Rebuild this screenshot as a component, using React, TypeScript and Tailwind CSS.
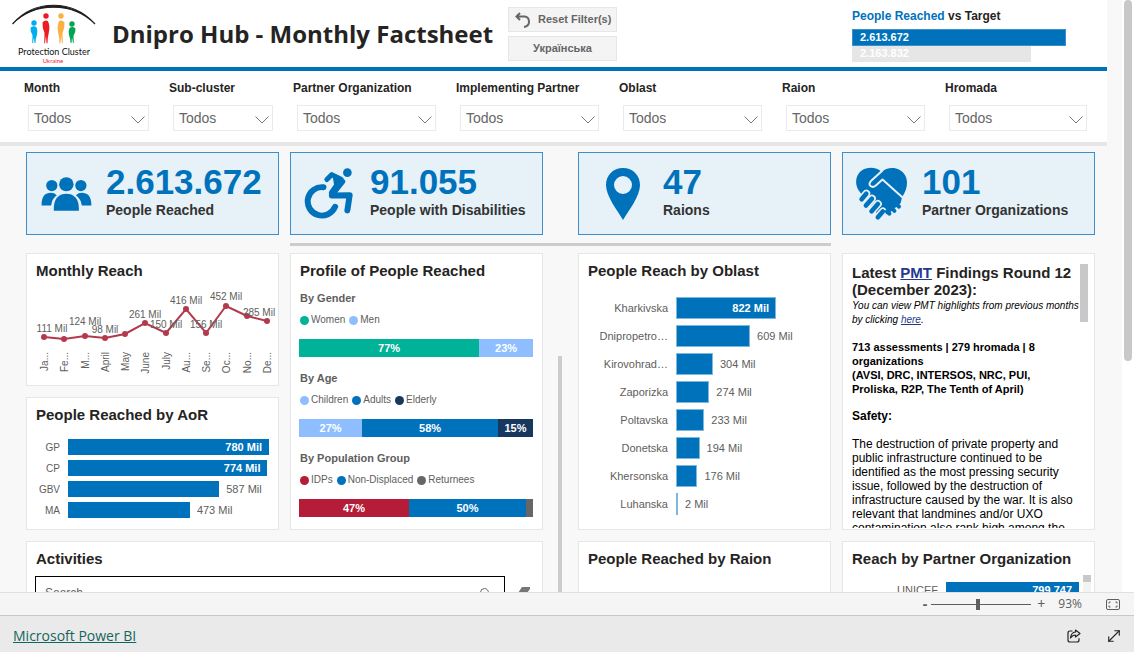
import { MoveDiagonal, Search } from "lucide-react";

const filters = [
  "Month",
  "Sub-cluster",
  "Partner Organization",
  "Implementing Partner",
  "Oblast",
  "Raion",
  "Hromada",
];

const monthly = [
  { month: "Ja...", x: 17, y: 47, label: "111 Mil", lx: 25, ly: 42 },
  { month: "Fe...", x: 37, y: 49 },
  { month: "M...", x: 58, y: 46, label: "124 Mil", lx: 58, ly: 35 },
  { month: "April", x: 78, y: 48, label: "98 Mil", lx: 78, ly: 43 },
  { month: "May", x: 98, y: 44 },
  { month: "June", x: 118, y: 33, label: "261 Mil", lx: 118, ly: 28 },
  { month: "July", x: 139, y: 43, label: "150 Mil", lx: 139, ly: 38 },
  { month: "Au...", x: 159, y: 19, label: "416 Mil", lx: 159, ly: 14 },
  { month: "Se...", x: 179, y: 43, label: "156 Mil", lx: 179, ly: 38 },
  { month: "Oc...", x: 199, y: 16, label: "452 Mil", lx: 199, ly: 10 },
  { month: "No...", x: 220, y: 26 },
  { month: "De...", x: 240, y: 31, label: "285 Mil", lx: 232, ly: 26 },
];

const aor = [
  { name: "GP", value: 780 },
  { name: "CP", value: 774 },
  { name: "GBV", value: 587 },
  { name: "MA", value: 473 },
];

const oblasts = [
  { name: "Kharkivska", value: 822 },
  { name: "Dnipropetro…", value: 609 },
  { name: "Kirovohrad…", value: 304 },
  { name: "Zaporizka", value: 274 },
  { name: "Poltavska", value: 233 },
  { name: "Donetska", value: 194 },
  { name: "Khersonska", value: 176 },
  { name: "Luhanska", value: 2 },
];

const profile = [
  {
    title: "By Gender",
    parts: [
      { name: "Women", value: 77, color: "bg-[#00b398]" },
      { name: "Men", value: 23, color: "bg-[#8ebeff]" },
    ],
  },
  {
    title: "By Age",
    parts: [
      { name: "Children", value: 27, color: "bg-[#8ebeff]" },
      { name: "Adults", value: 58, color: "bg-[#0072bc]" },
      { name: "Elderly", value: 15, color: "bg-[#18375f]" },
    ],
  },
  {
    title: "By Population Group",
    parts: [
      { name: "IDPs", value: 47, color: "bg-[#b41c37]" },
      { name: "Non-Displaced", value: 50, color: "bg-[#0072bc]" },
      { name: "Returnees", value: 3, color: "bg-[#666666]" },
    ],
  },
];

const Logo = () => (
  <svg viewBox="0 0 87 62" className="w-[87px] h-[62px] shrink-0" role="img" aria-label="Protection Cluster Ukraine">
    <path d="M.5 20 C22 -5 61 -5 83 20 C61 -2.500 22 -2.500 .5 20Z" fill="#231f20" stroke="#231f20" strokeWidth="1.2" />
    {[
      { x: 22, y: 19, c: "#00aeef", d: 1, s: 0.95 },
      { x: 34, y: 12, c: "#ed1c24", d: 1, s: 1.3 },
      { x: 49, y: 12, c: "#fbb040", d: -1, s: 1.3 },
      { x: 60, y: 20, c: "#00a651", d: -1, s: 0.9 },
    ].map((p) => (
      <g key={p.c} fill={p.c} transform={`translate(${p.x} ${p.y})`}>
        <circle r="2.7" />
        <path
          transform={`scale(${p.d} ${p.s})`}
          d="M-3.500 5 Q-1 2.500 2 4 Q4 7 3 12 Q1.500 17 1.500 21 L.5 21 L0 15 L-1 21 L-1.800 21 L-1.500 13 L-3.200 9Z"
        />
      </g>
    ))}
    <text x="42" y="51" textAnchor="middle" fontFamily="Lato, sans-serif" fontSize="9" fill="#111">
      Protection Cluster
    </text>
    <text x="41" y="59" textAnchor="middle" fontFamily="Lato, sans-serif" fontSize="6" fill="#ed1c24">
      Ukraine
    </text>
  </svg>
);

const PeopleIcon = () => (
  <svg viewBox="124 110 153 103" className="w-[51px] h-[34px]" fill="#0072bc">
    <circle cx="156" cy="136" r="17" />
    <circle cx="244" cy="136" r="17" />
    <ellipse cx="200" cy="132" rx="22" ry="21" />
    <path d="M162 212 V204 C163 174 178 161 200 161 C222 161 237 174 238 204 V212Z" />
    <path d="M125 196 C125 168 136 158 153 158 Q164 158 171 165 Q156 176 154 196Z" />
    <path d="M276 196 C276 168 264 158 247 158 Q236 158 229 165 Q244 176 247 196Z" />
  </svg>
);

const WheelchairIcon = () => (
  <svg viewBox="72 78 148 154" className="mr-1 w-[49px] h-[51px]" fill="none" stroke="#0072bc" strokeLinecap="round" strokeLinejoin="round">
    <circle cx="203" cy="92" r="13" fill="#0072bc" stroke="none" />
    <path d="M131 136 A43 43 0 1 0 166 195" strokeWidth="18" />
    <path d="M141 113 L156 98 L184 112" strokeWidth="15" />
    <path d="M166 104 L190 119 L160 157 L154 152 L170 130Z" fill="#0072bc" strokeWidth="14" />
    <path d="M156 161 L210 160 L203 206" strokeWidth="18" />
  </svg>
);

const PinIcon = () => (
  <svg viewBox="0 0 36 54" className="ml-1 w-9 h-[54px]">
    <path
      fill="#0072bc"
      fillRule="evenodd"
      d="M18 1 C8 1 1 8.500 1 18 C1 29 12 43 18 53 C24 43 35 29 35 18 C35 8.500 28 1 18 1Z M18 9 A9 9 0 1 1 18 27 A9 9 0 1 1 18 9Z"
    />
  </svg>
);

const HandshakeIcon = () => (
  <svg viewBox="74 82 160 162" className="mr-0.5 w-[53px] h-[54px]">
    <path
      fill="#0072bc"
      d="M154 96 C140 82 112 80 94 92 C74 106 72 136 88 156 L146 230 Q154 226 176 222 L212 190 L216 172 C230 154 236 128 226 108 C212 80 174 78 154 96Z"
    />
    <path d="M82 156 L136 244 H80Z" fill="#e6f1f8" />
    <path
      d="M157 92 L122 124 Q114 133 121 139 Q128 145 137 137 L157 119 L216 172"
      fill="none"
      stroke="#e6f1f8"
      strokeWidth="6"
      strokeLinecap="round"
      strokeLinejoin="round"
    />
    {[
      [94, 179, 108, 162],
      [107, 198, 125, 177],
      [124, 215, 143, 193],
      [143, 233, 158, 216],
    ].map(([x1, y1, x2, y2]) => (
      <g key={x1} strokeLinecap="round">
        <line x1={x1} y1={y1} x2={x2} y2={y2} stroke="#e6f1f8" strokeWidth="24" />
        <line x1={x1} y1={y1} x2={x2} y2={y2} stroke="#0072bc" strokeWidth="14" />
      </g>
    ))}
    <path d="M170 216 L178 222 M184 205 L193 214 M196 192 L207 201" stroke="#0072bc" strokeWidth="12" strokeLinecap="round" />
  </svg>
);

const Kpi = ({
  icon,
  value,
  label,
  className,
  iconWidth = "w-[79px]",
}: {
  icon: React.ReactNode;
  value: string;
  label: string;
  className: string;
  iconWidth?: string;
}) => (
  <div className={`${className} flex h-[83px] items-center border border-[#3e8fc9] bg-[#e6f1f8]`}>
    <div className={`${iconWidth} flex shrink-0 justify-center`}>{icon}</div>
    <div className="pb-1">
      <div className="text-[35px] leading-9 font-bold text-[#0072bc]">{value}</div>
      <div className="text-sm leading-5 font-bold text-[#333333]">{label}</div>
    </div>
  </div>
);

const Card = ({ title, className = "", children }: { title: string; className?: string; children?: React.ReactNode }) => (
  <section className={`${className} border border-[#e6e6e6] bg-white px-[9px] pt-2`}>
    <h2 className="text-[15px] leading-[18px] font-bold text-[#252423]">{title}</h2>
    {children}
  </section>
);

const MonthlyChart = () => (
  <svg viewBox="0 0 251 96" className="-mx-[9px] mt-2.5 w-[251px] h-24 text-[10px]" role="img" aria-label="Monthly Reach">
    <polyline points={monthly.map((m) => `${m.x},${m.y}`).join(" ")} fill="none" stroke="#b23a4c" strokeWidth="2" />
    {monthly.map((m) => (
      <g key={m.month}>
        <circle cx={m.x} cy={m.y} r="3" fill="#b23a4c" />
        <text transform={`translate(${m.x + 4} 62) rotate(-90)`} textAnchor="end" fill="#605e5c">
          {m.month}
        </text>
        {m.label && (
          <text x={m.lx} y={m.ly} textAnchor="middle" fill="#605e5c">
            {m.label}
          </text>
        )}
      </g>
    ))}
  </svg>
);

const ShareIcon = () => (
  <svg viewBox="0 0 14 14" className="size-3.5" fill="none" stroke="#252423" strokeWidth="1.2" strokeLinejoin="round">
    <path d="M5 2H3Q1 2 1 4V11Q1 13 3 13H10Q12 13 12 11V9.500" strokeLinecap="round" />
    <path d="M8.500 1L13 4.500L8.500 8V6Q5.500 6 3.500 9Q4 3.500 8.500 3Z" />
  </svg>
);

export default function App() {
  return (
    <div className="flex h-screen flex-col overflow-hidden bg-white font-['Liberation_Sans',Arial,sans-serif] text-[#252423]">
      <div className="flex min-h-0 flex-1 overflow-hidden">
        <main className="min-w-0 flex-1 bg-[#f8f8f8]">
          <header className="mr-[15px] flex h-[71px] border-b-4 border-[#0072bc] bg-white pl-3">
            <div className="pt-1">
              <Logo />
            </div>
            <h1 className="ml-[13px] w-[396px] shrink-0 pt-4 font-['Open_Sans',sans-serif] text-2xl leading-9 font-bold whitespace-nowrap">
              Dnipro Hub - Monthly Factsheet
            </h1>
            <div className="flex w-[109px] shrink-0 flex-col gap-1 pt-[7px]">
              <button className="flex h-[25px] items-center gap-[7px] border border-[#e6e6e6] bg-[#f4f4f4] pl-1.5 text-[11px] font-bold whitespace-nowrap text-[#666666]">
                <svg viewBox="0 0 16 16" className="size-4 shrink-0" fill="none" stroke="#666" strokeWidth="2">
                  <path d="M5 1L1.500 4.500L5 8M2 4.500H10Q14 5 14 10Q14 14 9 15" />
                </svg>
                Reset Filter(s)
              </button>
              <button className="h-[25px] border border-[#e6e6e6] bg-[#f4f4f4] text-[11px] font-bold text-[#666666]">
                Українська
              </button>
            </div>
            <div className="ml-auto w-[255px] shrink-0 pt-2 text-[11px] font-bold">
              <h2 className="text-xs leading-4">
                <span className="text-[#0072bc]">People Reached</span> vs Target
              </h2>
              <div className="mt-[5px] h-[17px] w-[214px] border border-[#3e8fc9] bg-[#0072bc] pl-[7px] leading-[15px] text-white">2.613.672</div>
              <div className="h-4 w-[179px] bg-[#e6e6e6] pl-2 leading-[15px] text-white">2.163.832</div>
            </div>
          </header>

          <form className="mr-[15px] grid h-[75px] grid-cols-[145fr_124fr_163fr_163fr_163fr_163fr_162fr] border-b-4 border-[#e6e6e6] bg-white pt-[9px] pl-6">
            {filters.map((name) => (
              <label key={name} className="block text-xs leading-4 font-bold whitespace-nowrap">
                {name}
                <span className="relative mt-[9px] mr-5 ml-1 block">
                  <select className="h-[26px] w-full appearance-none border border-[#eaeaea] bg-white pl-[5px] text-sm font-normal text-[#666666]">
                    <option>Todos</option>
                  </select>
                  <svg viewBox="0 0 14 8" className="pointer-events-none absolute top-[11px] right-1 h-2 w-3.5" fill="none" stroke="#777">
                    <path d="M.5 .5L7 7L13.500 .5" />
                  </svg>
                </span>
              </label>
            ))}
          </form>

          <div className="mr-[15px] grid grid-cols-[1fr_11px_1fr_35px_1fr_11px_1fr] pt-1.5 pr-3 pl-[26px]">
            <Kpi className="col-start-1" icon={<PeopleIcon />} value="2.613.672" label="People Reached" />
            <Kpi className="col-start-3" icon={<WheelchairIcon />} value="91.055" label="People with Disabilities" />
            <Kpi className="col-start-5" icon={<PinIcon />} value="47" label="Raions" iconWidth="w-[84px]" />
            <Kpi className="col-start-7" icon={<HandshakeIcon />} value="101" label="Partner Organizations" />

            <div className="col-span-3 col-start-3 mt-2 mb-1.5 h-[3px] bg-[#cccccc]" />

            <div className="col-span-3 col-start-1 grid grid-cols-[1fr_1fr] content-start gap-[11px] pt-px">
              <div className="flex flex-col gap-[11px]">
                <Card title="Monthly Reach" className="h-[133px]">
                  <MonthlyChart />
                </Card>
                <Card title="People Reached by AoR" className="h-[133px]">
                  <div className="mt-[15px] flex flex-col gap-[5px]">
                    {aor.map((a) => (
                      <div key={a.name} className="flex h-4 items-center text-[11px] text-[#605e5c]">
                        <span className="w-6 shrink-0 text-right text-[10px]">{a.name}</span>
                        <div className="ml-2 flex h-4 flex-1 items-center">
                          <div
                            className="flex h-4 items-center justify-end bg-[#0072bc] pr-[7px] font-bold text-white"
                            style={{ width: `${(a.value / 780) * 100}%` }}
                          >
                            {a.value > 600 && `${a.value} Mil`}
                          </div>
                          {a.value < 600 && <span className="ml-[7px] whitespace-nowrap">{a.value} Mil</span>}
                        </div>
                      </div>
                    ))}
                  </div>
                </Card>
              </div>

              <Card title="Profile of People Reached" className="h-[277px]">
                {profile.map((group) => (
                  <div key={group.title} className="h-20 pt-[11px]">
                    <h3 className="text-[11px] leading-[14px] font-bold text-[#605e5c]">{group.title}</h3>
                    <div className="mt-2 flex gap-1 text-[10px] leading-[14px] text-[#605e5c]">
                      {group.parts.map((p) => (
                        <span key={p.name} className="flex items-center gap-0.5">
                          <i className={`${p.color} size-[9px] rounded-full`} />
                          {p.name}
                        </span>
                      ))}
                    </div>
                    <div className="mt-3 -ml-px flex h-[18px]">
                      {group.parts.map((p) => (
                        <div
                          key={p.name}
                          className={`${p.color} text-center text-[11px] leading-[18px] font-bold text-white`}
                          style={{ width: `${p.value}%` }}
                        >
                          {p.value > 10 && `${p.value}%`}
                        </div>
                      ))}
                    </div>
                  </div>
                ))}
              </Card>

              <Card title="Activities" className="col-span-2 h-40">
                <div className="mt-2 -ml-px flex items-start">
                  <label className="flex h-[34px] flex-1 items-center border border-black px-[9px]">
                    <input type="text" placeholder="Search" aria-label="Search" className="min-w-0 flex-1 text-xs outline-none placeholder:text-[#666666]" />
                    <Search className="mr-1 size-3 text-[#666666]" />
                  </label>
                  <button aria-label="Clear selections" className="mt-2.5 mr-0.5 ml-3">
                    <svg viewBox="0 0 14 12" className="h-3 w-3.5" fill="#777">
                      <path d="M5 1H13V3L7 11H1V7Z" />
                    </svg>
                  </button>
                </div>
              </Card>
            </div>

            <div className="col-start-4 mt-[104px] ml-[15px] w-1 bg-[#cccccc]" />

            <div className="col-span-3 col-start-5 grid grid-cols-[1fr_1fr] content-start gap-[11px] pt-px">
              <Card title="People Reach by Oblast" className="h-[277px]">
                <div className="mt-[17px] flex flex-col gap-1.5">
                  {oblasts.map((o) => (
                    <div key={o.name} className="flex h-[22px] items-center text-[11px] text-[#605e5c]">
                      <span className="w-20 shrink-0 text-right">{o.name}</span>
                      <div className="ml-2 flex h-[22px] flex-1 items-center">
                        <div
                          className="flex h-[22px] items-center justify-end border border-[#7fb8dd] bg-[#0072bc] font-bold text-white"
                          style={{ width: `${(o.value / 822) * 69}%` }}
                        >
                          {o.value > 800 && <span className="pr-1.5">{o.value} Mil</span>}
                        </div>
                        {o.value < 800 && <span className="ml-[7px] whitespace-nowrap">{o.value} Mil</span>}
                      </div>
                    </div>
                  ))}
                </div>
              </Card>

              <section className="flex h-[277px] items-start overflow-hidden border border-[#e6e6e6] bg-white pt-2.5 pr-1.5 pb-0.5 pl-[9px]">
                <article className="h-[264px] min-w-0 flex-1 overflow-hidden text-xs leading-[14px] text-black">
                  <h2 className="text-[15px] leading-[17px] font-bold whitespace-nowrap text-[#252423]">
                    Latest <a href="#pmt" className="text-[#25378f] underline">PMT</a> Findings Round 12
                    <br />
                    (December 2023):
                  </h2>
                  <p className="mt-px text-[10px] whitespace-nowrap italic">
                    You can view PMT highlights from previous months
                    <br />
                    by clicking <a href="#previous" className="text-[#25378f] underline">here</a>.
                  </p>
                  <p className="mt-[13px] text-[11px] font-bold">
                    713 assessments | 279 hromada | 8
                    <br />
                    organizations
                    <br />
                    (AVSI, DRC, INTERSOS, NRC, PUI,
                    <br />
                    Proliska, R2P, The Tenth of April)
                  </p>
                  <h3 className="mt-[13px] font-bold">Safety:</h3>
                  <p className="mt-[14px] whitespace-nowrap">
                    The destruction of private property and
                    <br />
                    public infrastructure continued to be
                    <br />
                    identified as the most pressing security
                    <br />
                    issue, followed by the destruction of
                    <br />
                    infrastructure caused by the war. It is also
                    <br />
                    relevant that landmines and/or UXO
                    <br />
                    contamination also rank high among the
                  </p>
                </article>
                <div className="h-[58px] w-2 shrink-0 bg-[#c8c8c8]" />
              </section>

              <Card title="People Reached by Raion" className="h-40" />
              <Card title="Reach by Partner Organization" className="h-40 whitespace-nowrap">
                <div className="mt-[7px] -mr-1.5 flex items-start">
                  <div className="mt-[7px] flex flex-1 items-center text-[11px] text-[#605e5c]">
                    <span className="w-[86px] text-right">UNICEF</span>
                    <div className="ml-2 h-4 flex-1 bg-[#0072bc] pr-[7px] text-right leading-4 font-bold text-white">799.747</div>
                  </div>
                  <div className="ml-1 h-28 w-2 bg-[#f3f3f3]">
                    <div className="h-[7px] bg-[#c8c8c8]" />
                  </div>
                </div>
              </Card>
            </div>
          </div>
        </main>
        <div className="w-3 shrink-0 bg-white px-0.5">
          <div className="h-[361px] rounded-full bg-[#c8c8c8]" />
        </div>
      </div>

      <div className="flex h-[23px] shrink-0 items-center justify-end border-t border-[#e0e0e0] bg-[#f5f5f5] pr-[14px] font-['Open_Sans',sans-serif] text-xs text-[#605e5c]">
        <button aria-label="Zoom out" className="mr-1 text-sm leading-4 font-bold">-</button>
        <input
          type="range"
          aria-label="Zoom"
          min={0}
          max={200}
          defaultValue={93}
          className="h-px w-[100px] appearance-none bg-[#605e5c] [&::-webkit-slider-thumb]:h-[11px] [&::-webkit-slider-thumb]:w-1 [&::-webkit-slider-thumb]:appearance-none [&::-webkit-slider-thumb]:bg-[#605e5c]"
        />
        <button aria-label="Zoom in" className="ml-1.5 text-sm leading-4">+</button>
        <span className="ml-[13px]">93%</span>
        <button aria-label="Fit to page" className="ml-6">
          <svg viewBox="0 0 14 11" className="h-[11px] w-3.5" fill="none" stroke="#605e5c">
            <rect x=".5" y=".5" width="13" height="10" rx="1.5" />
            <path d="M3 4.500V3H4.500M9.500 3H11V4.500M11 6.500V8H9.500M4.500 8H3V6.500" />
          </svg>
        </button>
      </div>

      <footer className="flex h-[37px] shrink-0 items-center border-t border-[#c8c8c8] bg-[#eaeaea] pt-1 pr-[11px] pl-[13px]">
        <a href="#powerbi" className="font-['Open_Sans',sans-serif] text-sm text-[#14665c] underline">
          Microsoft Power BI
        </a>
        <button aria-label="Share" className="ml-auto">
          <ShareIcon />
        </button>
        <button aria-label="Full screen" className="ml-6">
          <MoveDiagonal strokeWidth={1.5} className="size-[18px] text-[#252423]" />
        </button>
      </footer>
    </div>
  );
}
